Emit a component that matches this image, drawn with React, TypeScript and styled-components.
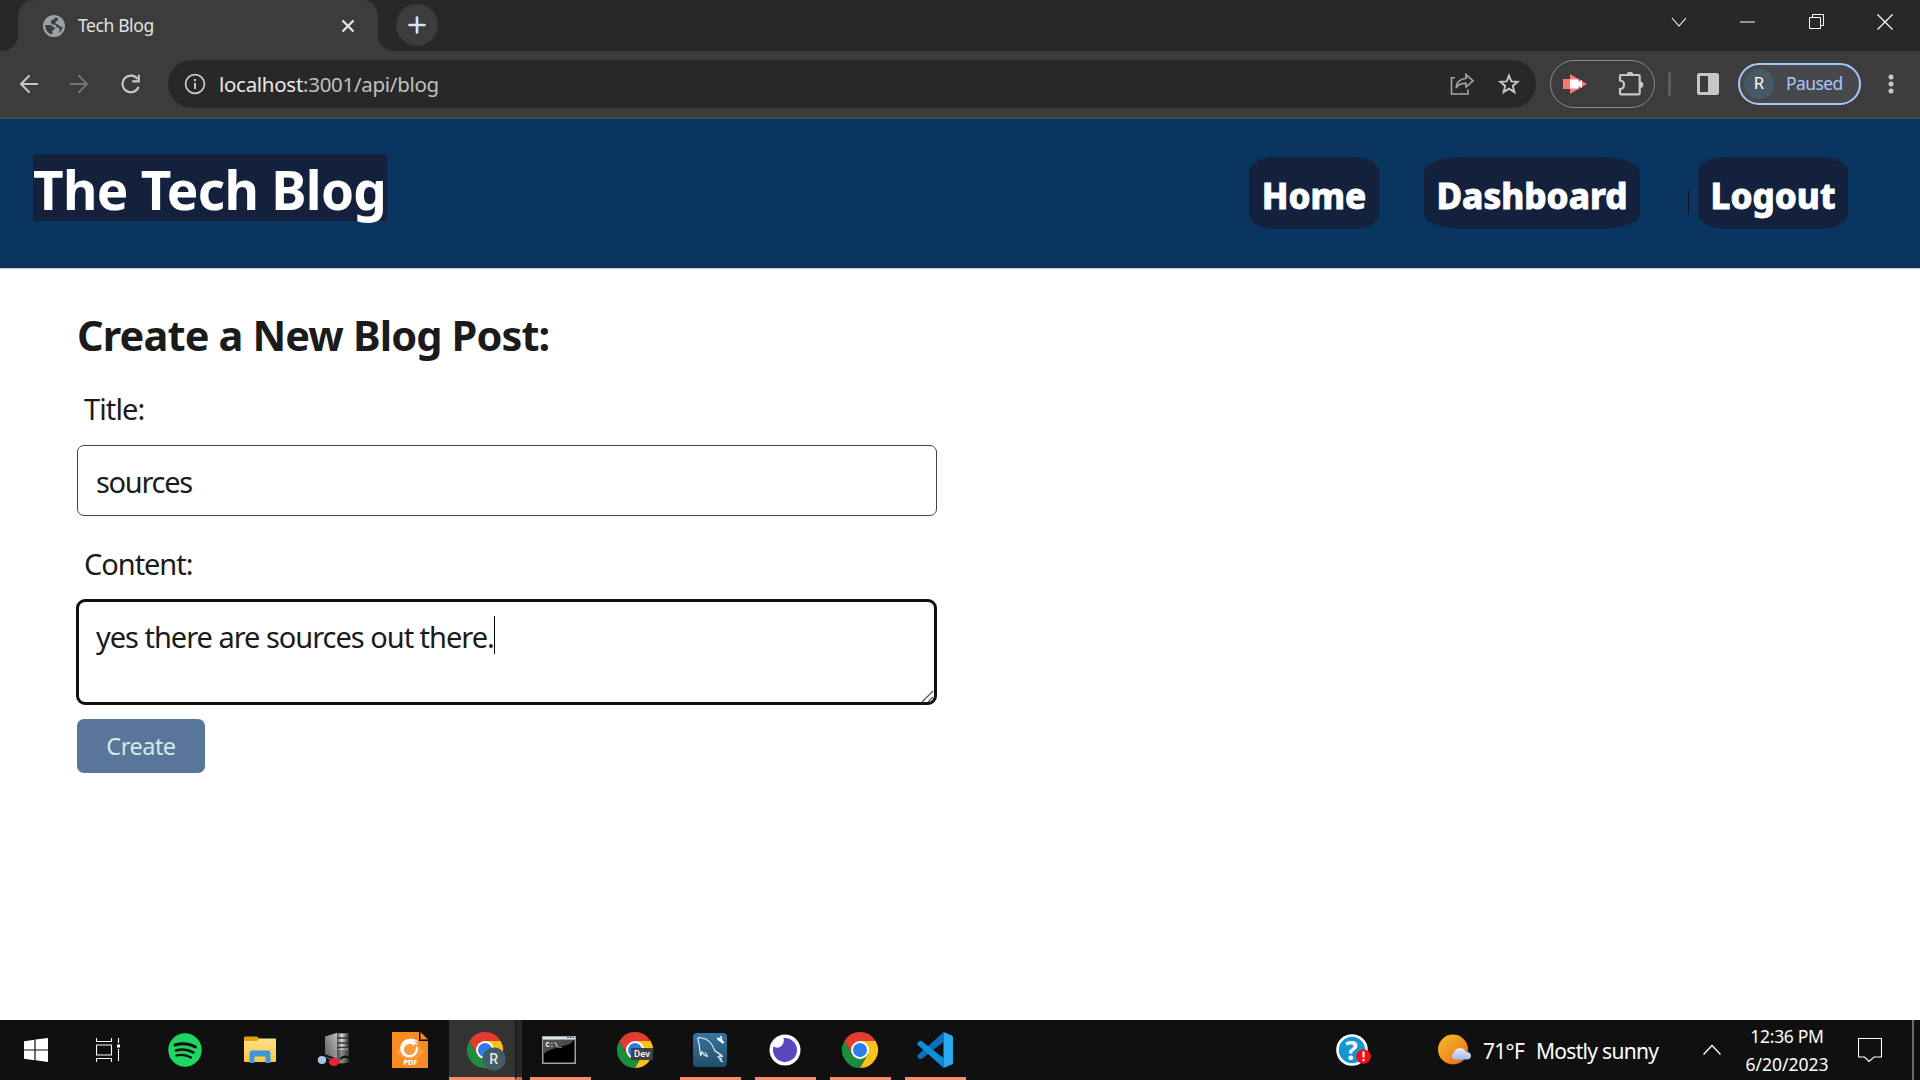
import React from "react";
import styled, { createGlobalStyle } from "styled-components";

const Global = createGlobalStyle`
  * { box-sizing: border-box; }
  body { margin: 0; background: #fff; font-family: "Noto Sans", "Open Sans", sans-serif; color: #1b1b1b; overflow: hidden; }
  svg { display: block; flex: none; }
  h1, h2 { margin: 0; }
`;

const Screen = styled.div`
  width: 1920px;
  height: 1080px;
  display: flex;
  flex-direction: column;
  overflow: hidden;
`;

const Label = styled.span<{ $size: number; $track?: number; $color?: string; $w?: number; $lift?: number }>`
  font-size: ${(p) => p.$size}px;
  letter-spacing: ${(p) => p.$track ?? 0}px;
  color: ${(p) => p.$color ?? "inherit"};
  width: ${(p) => (p.$w ? `${p.$w}px` : "auto")};
  padding-bottom: ${(p) => p.$lift ?? 0}px;
  white-space: pre;
`;

const Gap = styled.div<{ $w: number }>`
  width: ${(p) => p.$w}px;
  flex: none;
`;

/* ---------- browser chrome ---------- */

const TabStrip = styled.div`
  height: 51px;
  background: #282828;
  display: flex;
  align-items: flex-start;
`;

const TabFoot = styled.div<{ $side: "left" | "right" }>`
  width: 18px;
  height: 51px;
  background: #3c3c3c;
  &::before {
    content: "";
    display: block;
    height: 51px;
    background: #282828;
    border-radius: ${(p) => (p.$side === "left" ? "0 0 16px 0" : "0 0 0 16px")};
  }
`;

const TabWrap = styled.div`
  background: #282828;
`;

const Tab = styled.div`
  width: 360px;
  height: 51px;
  padding: 0 22px 0 25px;
  background: #3c3c3c;
  border-radius: 16px 16px 0 0;
  display: flex;
  align-items: center;
  gap: 13px;
`;

const Spacer = styled.div`
  flex: 1;
`;

const NewTab = styled.div`
  width: 42px;
  height: 42px;
  margin: 4px 0 0 0;
  border-radius: 50%;
  background: #3c3c3c;
  display: flex;
  align-items: center;
  justify-content: center;
`;

const WindowButtons = styled.div`
  height: 43px;
  display: flex;
  align-items: center;
  gap: 53px;
  padding-right: 27px;
`;

const Toolbar = styled.div`
  height: 68px;
  background: #3c3c3c;
  border-bottom: 2px solid #474747;
  display: flex;
  align-items: center;
  padding: 0 20px 0 19px;
`;

const AddressBar = styled.div`
  width: 1368px;
  height: 48px;
  border-radius: 24px;
  background: #282828;
  display: flex;
  align-items: center;
  padding: 0 16px 0 16px;
`;

const ExtensionPill = styled.div`
  width: 105px;
  height: 48px;
  border-radius: 24px;
  border: 1.5px solid #8a8a8a;
  display: flex;
  align-items: center;
  justify-content: space-between;
  padding: 0 10px 0 12px;
`;

const Divider = styled.div`
  width: 3px;
  height: 24px;
  border-radius: 2px;
  background: #5e5e5e;
`;

const Profile = styled.div`
  width: 123px;
  height: 42px;
  border-radius: 21px;
  border: 2px solid #a8c7fa;
  background: #47484c;
  display: flex;
  align-items: center;
  padding-left: 4px;
  gap: 12px;
`;

const Avatar = styled.div`
  width: 30px;
  height: 30px;
  border-radius: 50%;
  background: #455a64;
  color: #fff;
  font: 400 16px/30px Roboto, sans-serif;
  text-align: center;
`;

/* ---------- page ---------- */

const Header = styled.header`
  height: 150px;
  background: #0a3561;
  border-bottom: 1px solid #c9cdd2;
  display: flex;
  align-items: flex-start;
  justify-content: space-between;
  padding: 35px 72px 0 33px;
`;

const SiteTitle = styled.h1`
  width: 354px;
  height: 67px;
  line-height: 71px;
  background: #14213d;
  color: #fff;
  font-size: 53px;
  font-weight: 700;
  letter-spacing: -0.7px;
  white-space: nowrap;
`;

const Nav = styled.nav`
  display: flex;
  padding-top: 3px;
`;

const NavLink = styled.a<{ $w: number; $track: number }>`
  width: ${(p) => p.$w}px;
  height: 72px;
  line-height: 77px;
  border-radius: 20%;
  background: #14213d;
  color: #fff;
  font-size: 35px;
  font-weight: 800;
  -webkit-text-stroke: 0.8px #fff;
  letter-spacing: ${(p) => p.$track}px;
  white-space: nowrap;
  text-align: center;
`;

const NavRule = styled.div`
  width: 1px;
  height: 24px;
  margin: 33px 9px 0 48px;
  background: #101418;
`;

const Main = styled.main`
  flex: 1;
  background: #fff;
  padding: 41px 77px 0;
  display: flex;
  flex-direction: column;
  align-items: flex-start;
`;

const Heading = styled.h2`
  height: 50px;
  line-height: 50px;
  font-size: 41.5px;
  font-weight: 700;
  letter-spacing: -0.87px;
  white-space: nowrap;
`;

const FieldLabel = styled.label<{ $top: number; $track: number }>`
  margin: ${(p) => p.$top}px 0 0 7px;
  height: 40px;
  line-height: 41px;
  font-size: 29px;
  letter-spacing: ${(p) => p.$track}px;
`;

const Field = styled.div<{ $h: number; $top: number; $focus?: boolean }>`
  width: ${(p) => (p.$focus ? 861 : 860)}px;
  height: ${(p) => p.$h}px;
  margin: ${(p) => p.$top}px 0 0 ${(p) => (p.$focus ? -1 : 0)}px;
  border: ${(p) => (p.$focus ? "3px solid #101010" : "1px solid #444")};
  border-radius: ${(p) => (p.$focus ? 9 : 7)}px;
  padding: ${(p) => (p.$focus ? "14px 0 0 17px" : "16px 0 0 18px")};
  position: relative;
  display: flex;
  align-items: flex-start;
  line-height: ${(p) => (p.$focus ? 41 : 40)}px;
`;

const Caret = styled.div`
  width: 1px;
  height: 38px;
  background: #000;
`;

const Resizer = styled.svg`
  position: absolute;
  right: 0;
  bottom: 0;
`;

const CreateButton = styled.div`
  width: 128px;
  height: 54px;
  margin-top: 14px;
  border-radius: 7px;
  background: #577699;
  display: flex;
  align-items: center;
  justify-content: center;
`;

/* ---------- taskbar ---------- */

const Taskbar = styled.footer`
  height: 60px;
  background: #101010;
  color: #fff;
  display: flex;
  align-items: stretch;
`;

const Task = styled.div<{ $w: number; $running?: boolean; $active?: boolean; $shift?: number }>`
  width: ${(p) => p.$w}px;
  flex: none;
  display: flex;
  align-items: center;
  justify-content: center;
  background: ${(p) => (p.$active ? "#333" : "transparent")};
  border-bottom: 3px solid ${(p) => (p.$running ? "#f98b6f" : "transparent")};
  padding-top: 3px;
  padding-right: ${(p) => p.$shift ?? 0}px;
`;

const ActiveEdge = styled.div`
  width: 7px;
  background: #282828;
  border-left: 2px solid #1d1d1d;
  border-bottom: 3px solid #c46e58;
  margin-right: 8px;
`;

const Tray = styled.div`
  flex: 1;
  display: flex;
  align-items: center;
`;

const Weather = styled.div`
  display: flex;
  padding-top: 2px;
`;

const Clock = styled.div`
  display: flex;
  flex-direction: column;
  align-items: center;
  line-height: 28px;
  width: 90px;
`;

const ShowDesktop = styled.div`
  width: 8px;
  height: 60px;
  border-left: 2px solid #6a6a6a;
`;

/* ---------- icons ---------- */

const Globe = () => (
  <svg width="22" height="22" viewBox="0 0 22 22">
    <circle cx="11" cy="11" r="10.800" fill="#9aa0a6" />
    <path d="M2 10h4.500c2.200 0 3.200.8 3.500 2.200h1.800v2.600H9.500v3.200l-.8 1.800C4.800 18.800 2 15 2 10z" fill="#3c3c3c" />
    <path d="M12.500 2.200v1.600c0 1-.8 1.600-1.800 1.600H9v1.900c0 .6-.4 1-1 1H6.300v1.600h5c.9 0 1.500.7 1.500 1.500v2h1.300c.9 0 1.600.5 1.800 1.400L17.200 17c4-4 2.500-9-.2-11.700V6c0 1.200-.8 1.800-1.900 1.800h-1.600V5.500l1.500-2.300z" fill="#3c3c3c" opacity="0" />
    <path d="M12.800 2.200 10.500 4.500 8 5.500v2.300L9.500 9.500l3 .3 1 2.400 2.300.6 1 1.900-.8 3.300c2-1 3.500-3.500 3.700-6l-2.700-.5-1.500-1.800-2.700-.7-.5-2 2-1.200 1.200-2.400z" fill="#3c3c3c" />
    <circle cx="11" cy="11" r="9.900" fill="none" stroke="#9aa0a6" strokeWidth="1.900" />
  </svg>
);

const ChromeLogo = ({ badge }: { badge?: "R" | "Dev" }) => (
  <svg width="40" height="40" viewBox="-20 -20 40 40" overflow="visible">
    <path d="M-15.600-9A18 18 0 0 0 0 18L7.800 4.500 0 0-7.800 4.500z" fill="#1e8e3e" />
    <path d="M0 18A18 18 0 0 0 15.600-9H0L7.800 4.500z" fill="#fcc11a" />
    <path d="M-15.600-9A18 18 0 0 1 15.600-9H0V0L-7.800 4.500z" fill="#e33b2e" />
    <circle r="9" fill="#fff" />
    <circle r="7" fill="#2b7de9" />
    {badge === "R" && (
      <>
        <circle cx="9" cy="9" r="11.600" fill="#455a64" />
        <text x="8.600" y="14" fontFamily="Roboto" fontWeight="500" fontSize="14" fill="#e3e8ea" textAnchor="middle">R</text>
      </>
    )}
    {badge === "Dev" && (
      <>
        <rect x="-4" y="-2" width="22" height="12" fill="#3f4143" />
        <text x="7" y="7.300" fontFamily="Roboto" fontWeight="500" fontSize="9.500" fill="#fff" textAnchor="middle">Dev</text>
      </>
    )}
  </svg>
);

const ServerIcon = () => (
  <svg width="34" height="36" viewBox="0 0 34 36">
    <defs>
      <linearGradient id="srv" x1="0" x2="1"><stop offset="0" stopColor="#555" /><stop offset=".4" stopColor="#ddd" /><stop offset="1" stopColor="#222" /></linearGradient>
      <linearGradient id="srvSide" x1="0" x2="1" y1="1" y2="0"><stop offset="0" stopColor="#555" /><stop offset="1" stopColor="#bbb" /></linearGradient>
    </defs>
    <path d="M8 4.500 19 1h13v29l-9 2L8 25z" fill="#555" />
    <path d="M8 4.500 20 1v30L8 25z" fill="url(#srvSide)" />
    <path d="M20 1.500h12v29H20z" fill="url(#srv)" />
    <path d="M20 6h12M20 11h12M20 15.500h12" stroke="#333" strokeWidth="1.400" />
    <path d="M20 18h12v12H20z" fill="#444" opacity=".55" />
    <path d="M1 26q2-4 9-2 5 2 8 3M23 27q5-4 9-1l1 3" fill="none" stroke="#111" strokeWidth="2.200" />
    <ellipse cx="5" cy="28" rx="4.200" ry="4" fill="#a9c3ec" />
    <ellipse cx="17" cy="30" rx="5" ry="4" fill="#ea2330" />
    <circle cx="30" cy="17" r="1" fill="#5fd83a" />
  </svg>
);

const PdfIcon = () => (
  <svg width="36" height="36" viewBox="0 0 36 36">
    <path d="M0 0h27v9h9v27H0z" fill="#f78a20" />
    <path d="m28.500 0 7.500 7.500H28.500z" fill="#f78a20" />
    <path d="M18 5 33 20 18 32 3 20z" fill="#fba552" opacity=".6" />
    <path d="M21 7C13 5.500 8.300 11 8.300 16.500c0 5 4 9 9 9s9-4 8.700-9.500l-1.500-2-1 4c-.5 3-3 5.200-6 5-3.500-.2-5.800-2.800-5.500-6 .3-3 3-5 5.500-5 2 0 3.500.8 4.500 2.200l.5-2.500 3 1.300c-.5-1.800-2-3.200-3.800-3.700 2 0 4 .4 5.300 1.700C26 9 24 7.400 21 7z" fill="#fff" />
    <text x="18.300" y="32.700" fontFamily="Noto Sans" fontWeight="800" fontSize="7.500" fill="#fff" textAnchor="middle">PDF</text>
  </svg>
);

const App = () => (
  <Screen>
    <Global />
    <TabStrip>
      <TabFoot $side="left" />
      <TabWrap>
        <Tab>
          <Globe />
          <Label $size={17.500} $color="#e3e3e3" $track={-0.400} $lift={1}>Tech Blog</Label>
          <Spacer />
          <svg width="16" height="16" viewBox="0 0 16 16" stroke="#e3e3e3" strokeWidth="2.400"><path d="m2.500 2.500 11 11m0-11-11 11" /></svg>
        </Tab>
      </TabWrap>
      <TabFoot $side="right" />
      <NewTab>
        <svg width="18" height="18" viewBox="0 0 18 18" stroke="#d3e3fd" strokeWidth="2.700" strokeLinecap="round"><path d="M9 1.500v15M1.500 9h15" /></svg>
      </NewTab>
      <Spacer />
      <WindowButtons>
        <svg width="16" height="16" viewBox="0 0 16 16" fill="none" stroke="#fff" strokeWidth="1.100"><path d="m1 4 7 8 7-8" /></svg>
        <svg width="15" height="16" viewBox="0 0 15 16"><path d="M0 7.500h15v1H0z" fill="#fff" /></svg>
        <svg width="16" height="16" viewBox="0 0 16 16" fill="none" stroke="#fff"><path d="M1.500 3.500h11v11h-11zM4.500 3.500v-3h11v11h-3" /></svg>
        <svg width="16" height="16" viewBox="0 0 16 16" stroke="#fff" strokeWidth="1.200"><path d="m.5.5 15 15m0-15-15 15" /></svg>
      </WindowButtons>
    </TabStrip>

    <Toolbar>
      <svg width="20" height="20" viewBox="0 0 20 20" fill="none" stroke="#c7c7c7" strokeWidth="2"><path d="M19 10H2M10.500 1.500 2 10l8.500 8.500" /></svg>
      <Gap $w={31} />
      <svg width="20" height="20" viewBox="0 0 20 20" fill="none" stroke="#757575" strokeWidth="2"><path d="M0 10h17M8.500 1.500 17 10l-8.500 8.500" /></svg>
      <Gap $w={31} />
      <svg width="20" height="20" viewBox="0 0 20 20" fill="none" stroke="#c7c7c7" strokeWidth="2.100"><path d="M16.500 5A8.300 8.300 0 1 0 17.600 12.800M17.800.8v6.600h-6.600" /></svg>
      <Gap $w={27} />
      <AddressBar>
        <svg width="22" height="22" viewBox="0 0 22 22" fill="none" stroke="#c7c7c7" strokeWidth="1.800"><circle cx="11" cy="11" r="9.400" /><path d="M11 10v6M11 6v2.200" strokeWidth="2" /></svg>
        <Gap $w={13} />
        <Label $size={20.500} $color="#e8e8e8" $track={-0.290}>localhost<Label as="span" $size={20.500} $color="#c0c0c0" $track={-0.290}>:3001/api/blog</Label></Label>
        <Spacer />
        <svg width="24" height="22" viewBox="0 0 24 22" fill="none" stroke="#a6a6a6" strokeWidth="1.600"><path d="M5 4.800H1.500v16.200h16.500v-4.500M16 1.500l7 6.300-7 6.200v-3.800c-5 0-8 1-10 5C6.500 9.500 9.500 6 16 5.200z" /></svg>
        <Gap $w={24} />
        <svg width="22" height="22" viewBox="0 0 22 22" fill="none" stroke="#c7c7c7" strokeWidth="1.900"><path d="m11 2.500 2.300 5.900 6.400.4-4.900 4.100 1.600 6.200-5.400-3.500-5.400 3.500 1.600-6.200-4.900-4.100 6.400-.4z" /></svg>
      </AddressBar>
      <Gap $w={14} />
      <ExtensionPill>
        <svg width="24" height="20" viewBox="0 0 24 20"><path d="M0 5h7V0l17 10L7 20v-5H0z" fill="#f87878" /><path d="M7 5.500h8.500v3l3.500-2.500v8l-3.500-2.500v3H7z" fill="#fff" /></svg>
        <svg width="26" height="26" viewBox="0 0 26 26" fill="none" stroke="#c7c7c7" strokeWidth="2.200"><path d="M3 4h17.500a1.200 1.200 0 0 1 1.200 1.200v17a1.200 1.200 0 0 1-1.200 1.200H3.200A1.200 1.200 0 0 1 2 22.200V18c2.600 0 4-2 4-4.200S4.600 9.500 2 9.500V5.200A1.200 1.200 0 0 1 3 4z" /><path d="M8.700 4a3.300 3.300 0 0 1 6.600 0zM22 10.500a3.300 3.300 0 0 1 0 6.600z" fill="#c7c7c7" stroke="none" /></svg>
      </ExtensionPill>
      <Gap $w={13} />
      <Divider />
      <Gap $w={26} />
      <svg width="22" height="22" viewBox="0 0 22 22"><path fillRule="evenodd" d="M2.500 0h17A2.500 2.500 0 0 1 22 2.500v17a2.500 2.500 0 0 1-2.500 2.500h-17A2.500 2.500 0 0 1 0 19.500v-17A2.500 2.500 0 0 1 2.500 0zM3 3v16h8V3z" fill="#c7c7c7" /></svg>
      <Gap $w={19} />
      <Profile>
        <Avatar>R</Avatar>
        <Label $size={17.500} $color="#a8c7fa" $track={-0.600} $lift={2}>Paused</Label>
      </Profile>
      <Gap $w={27} />
      <svg width="6" height="20" viewBox="0 0 6 20" fill="#c7c7c7"><circle cx="3" cy="3" r="2.500" /><circle cx="3" cy="10" r="2.500" /><circle cx="3" cy="17" r="2.500" /></svg>
    </Toolbar>

    <Header>
      <SiteTitle>The Tech Blog</SiteTitle>
      <Nav>
        <NavLink $w={130} $track={0}>Home</NavLink>
        <Gap $w={45} />
        <NavLink $w={216} $track={0}>Dashboard</NavLink>
        <NavRule />
        <NavLink $w={150} $track={0}>Logout</NavLink>
      </Nav>
    </Header>

    <Main>
      <Heading>Create a New Blog Post:</Heading>
      <FieldLabel $top={28} $track={-0.900}>Title:</FieldLabel>
      <Field $h={71} $top={17}>
        <Label $size={29} $track={-1.300}>sources</Label>
      </Field>
      <FieldLabel $top={27} $track={-1.050}>Content:</FieldLabel>
      <Field $h={106} $top={16} $focus>
        <Label $size={29} $track={-1.020}>yes there are sources out there.</Label>
        <Caret />
        <Resizer width="13" height="12" viewBox="0 0 13 12" fill="none" stroke="#555" strokeWidth="1.300"><path d="M1 12 12 1M7 12l5-5" /></Resizer>
      </Field>
      <CreateButton>
        <Label $size={23.500} $color="#d5e8e6" $track={-0.500}>Create</Label>
      </CreateButton>
    </Main>

    <Taskbar>
      <Task $w={72}>
        <svg width="24" height="24" viewBox="0 0 24 24" fill="#fff"><path d="M0 3.300 10.400 1.700v9.700H0zM11.600 1.500 24 0v11.400H11.600zM0 12.600h10.400v9.700L0 20.800zM11.600 12.600H24V24l-12.400-1.700z" /></svg>
      </Task>
      <Task $w={72}>
        <svg width="25" height="24" viewBox="0 0 25 24" fill="none" stroke="#fff" strokeWidth="1.100"><path d="M.5 0v3.500h15V0M.5 7h15v10H.5zM.5 24v-3.500h15V24M22.500 0v5M22.500 11v12" /><path d="M21 6.500h3v3h-3z" fill="#fff" stroke="none" /></svg>
      </Task>
      <Task $w={81}>
        <svg width="34" height="34" viewBox="0 0 34 34" fill="none" stroke="#101010" strokeLinecap="round"><circle cx="17" cy="17" r="16.700" fill="#1ed760" stroke="none" /><path d="M7 12c6.500-2 14.500-1.500 20.500 2" strokeWidth="3" /><path d="M8 17.500c6-1.700 12-1 17.500 2" strokeWidth="2.600" /><path d="M8.500 22.500c5-1.300 10-.7 14.500 2" strokeWidth="2.200" /></svg>
      </Task>
      <Task $w={70}>
        <svg width="32" height="28" viewBox="0 0 32 28"><defs><linearGradient id="fold" x2="0" y2="1"><stop stopColor="#ffe08a" /><stop offset="1" stopColor="#fcc644" /></linearGradient></defs><path d="M0 1.500Q0 .5 1 .5h12l2.500 2.500V8H0z" fill="#e0a30b" /><path d="M0 5h13l2-2.500h16q1 0 1 1V25q0 1-1 1H1q-1 0-1-1z" fill="url(#fold)" /><path d="M5.500 27V17q0-2.500 2.500-2.500h16q2.500 0 2.500 2.500v10h-5v-6.500h-11V27z" fill="#3f95dc" /></svg>
      </Task>
      <Task $w={78}><ServerIcon /></Task>
      <Task $w={76} $shift={2}><PdfIcon /></Task>
      <Task $w={66} $running $active><Gap $w={6} /><ChromeLogo badge="R" /></Task>
      <ActiveEdge />
      <Task $w={61} $running $shift={3}>
        <svg width="34" height="28" viewBox="0 0 34 28"><path d="M0 0h34v28H0z" fill="#98a3a9" /><path d="M1 1h32v2H1z" fill="#dfe5e8" /><path d="M1.500 4h31v22.500h-31z" fill="#000" /><path d="M1.500 4h30C28 12 12 9 1.500 18z" fill="#4d4d4d" /><path d="M25 1.500h2m1 0h2m1 0h1" stroke="#445" /><text x="3.500" y="10.500" fontFamily="Liberation Mono" fontWeight="700" fontSize="7" fill="#fff">C:\_</text></svg>
      </Task>
      <Gap $w={13} />
      <Task $w={62}><ChromeLogo badge="Dev" /></Task>
      <Gap $w={14} />
      <Task $w={61} $running $shift={1}>
        <svg width="34" height="34" viewBox="0 0 34 34" fill="none" stroke="#e6eef3" strokeWidth="1.200" strokeLinejoin="round"><defs><linearGradient id="sql" x2="0" y2="1"><stop stopColor="#38759f" /><stop offset="1" stopColor="#204e6b" /></linearGradient></defs><rect width="34" height="34" rx="4" fill="url(#sql)" stroke="none" /><path d="M11.500 22.500c-1-1.500-1.500-2-2.500-4-.5 1.500-.5 3-1.200 4C6.500 20 7 17 6.500 14 6.500 11 6 9.500 5 7 4 5 6 4 8.500 5 15 5.500 19.500 11 22 18c2 1.500 5 2.500 7.500 5.500-3-.8-4.500-.5-4.500.8l3.500 1.500c-2.500 0-2 1.200 1.500 3.200M11.500 22.500l3 .8-2.500-4" /><path d="m25.500 5.500 5 4.500" stroke="#fff" strokeWidth="2.400" /><path d="M24.500 4.500c.3 2.300 1.800 3 4 2 .3-1.600-.3-2.600-1.300-3.300" stroke="#fff" strokeWidth="1.500" /></svg>
      </Task>
      <Gap $w={14} />
      <Task $w={61} $running $shift={2}>
        <svg width="32" height="32" viewBox="0 0 32 32"><circle cx="16" cy="16" r="15.500" fill="#fff" /><path d="M16 4A12 12 0 1 1 4.500 12.600c5 3.500 12-1.600 10-8.500z" fill="#5849be" /></svg>
      </Task>
      <Gap $w={14} />
      <Task $w={61} $running $shift={2}><ChromeLogo /></Task>
      <Gap $w={14} />
      <Task $w={61} $running $shift={2}>
        <svg width="36" height="36" viewBox="0 0 36 36"><path d="M.8 23 26.500.3V10L4.500 27q-1 .5-2 0L.8 25.500Q-.4 24.300.8 23z" fill="#0a70b8" /><path d="M.8 13 26.500 35.700V26L4.500 9q-1-.5-2 0L.8 10.500Q-.4 11.700.8 13z" fill="#0f8cd8" /><path d="m26.500 0 8.300 3.500Q36 4 36 5.500v25q0 1.500-1.200 2L26.500 36z" fill="#2aa9f0" /></svg>
      </Task>
      <Gap $w={370} />
      <Tray>
        <svg width="36" height="34" viewBox="0 0 36 34"><circle cx="16" cy="17" r="15.800" fill="#fff" /><circle cx="16" cy="17" r="13.200" fill="#1697d5" /><text x="15.500" y="26.500" fontFamily="Noto Sans" fontWeight="700" fontSize="26" fill="#fff" textAnchor="middle">?</text><circle cx="27.500" cy="23.500" r="7.300" fill="#f01018" /><path d="M27.500 18.500v6M27.500 26v2.200" stroke="#fff" strokeWidth="2" /></svg>
        <Gap $w={66} />
        <svg width="34" height="32" viewBox="0 0 34 32"><defs><linearGradient id="sun" x2="1" y2="1"><stop stopColor="#f3c132" /><stop offset="1" stopColor="#ee660f" /></linearGradient><linearGradient id="cloud" x2="0" y2="1"><stop stopColor="#e3edfd" /><stop offset="1" stopColor="#9fbdf0" /></linearGradient></defs><circle cx="15" cy="15.500" r="15" fill="url(#sun)" /><path d="M16 25.500a4 4 0 0 1 0-7 5 5 0 0 1 4-4 6 6 0 0 1 8 3.500q5 0 5 4-.5 3.500-4 3.500z" fill="url(#cloud)" /></svg>
        <Gap $w={11} />
        <Weather>
          <Label $size={21} $track={-0.700} $w={53}>71°F</Label>
          <Label $size={21} $track={-0.700}>Mostly sunny</Label>
        </Weather>
        <Spacer />
        <svg width="18" height="12" viewBox="0 0 18 12" fill="none" stroke="#fff" strokeWidth="1.300"><path d="m.5 10.500 8.500-9 8.500 9" /></svg>
        <Gap $w={21} />
        <Clock>
          <Label $size={17.500} $track={-0.300}>12:36 PM</Label>
          <Label $size={17.500}>6/20/2023</Label>
        </Clock>
        <Gap $w={26} />
        <svg width="24" height="25" viewBox="0 0 24 25" fill="none" stroke="#fff" strokeWidth="1.100"><path d="M.5.500h23v18.500h-7.500L11 23.500 6.500 19h-6z" /></svg>
        <Gap $w={30} />
        <ShowDesktop />
      </Tray>
    </Taskbar>
  </Screen>
);

export default App;
